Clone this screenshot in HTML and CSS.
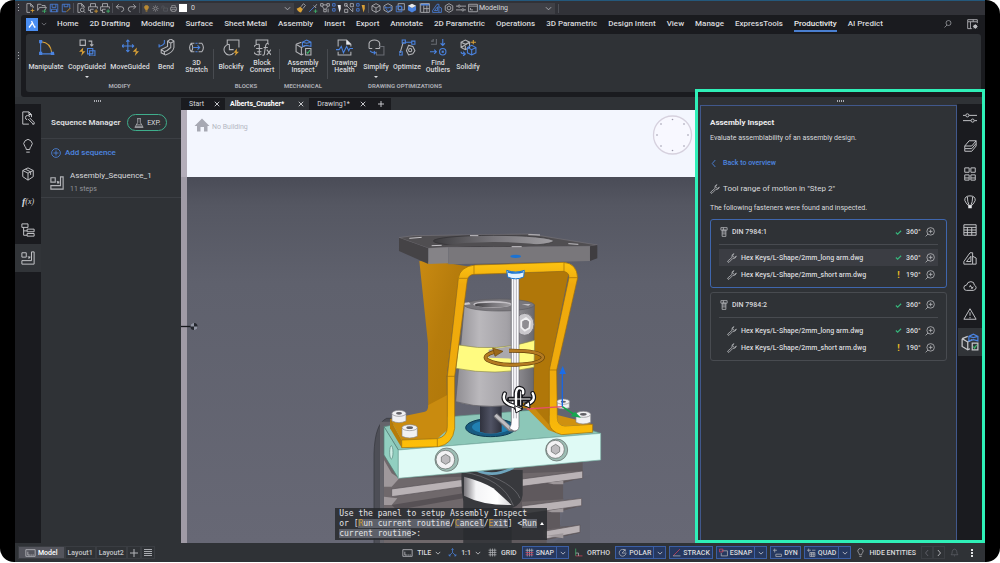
FILE: index.html
```html
<!DOCTYPE html>
<html lang="en">
<head>
<meta charset="utf-8">
<meta name="viewport" content="width=device-width, initial-scale=1">
<title>Alberts_Crusher - Assembly Inspect</title>
<link rel="stylesheet" href="styles.css">
</head>
<body>
<svg class="defs" aria-hidden="true">
  <symbol id="chev" viewBox="0 0 8 8"><path d="M1 2.5 4 5.5 7 2.5"/></symbol>
  <symbol id="close" viewBox="0 0 8 8"><path d="M1 1 7 7M7 1 1 7"/></symbol>
  <symbol id="plus" viewBox="0 0 8 8"><path d="M4 0V8M0 4H8"/></symbol>
  <symbol id="new" viewBox="0 0 16 16"><path d="M9 1H3V15H8M9 1 13 5V8M9 1V5H13"/><path class="y" d="M9 12H15M12 9V15"/></symbol>
  <symbol id="open" viewBox="0 0 16 16"><path d="M1 12V2H6L8 4H13V7M1 12 4 7H15L13 11"/><path class="g" d="M8 13H15M12 10V16"/></symbol>
  <symbol id="save" viewBox="0 0 16 16"><path class="b" d="M2 2H14V14H2ZM5 2V7H11V2M4 14V10H12V14"/></symbol>
  <symbol id="saveas" viewBox="0 0 16 16"><path class="b" d="M8 14H2V2H14V8M5 2V6H11V2"/><path class="y" d="M9 14 15 8"/></symbol>
  <symbol id="preview" viewBox="0 0 16 16"><path d="M7 15H3V1H9L13 5V8M9 1V5H13"/><circle cx="10" cy="11" r="3"/><path d="m12 13 3 3"/></symbol>
  <symbol id="print" viewBox="0 0 16 16"><path d="M4 6V1H12V6M4 12H1V6H15V12H12M4 10H12V15H4Z"/></symbol>
  <symbol id="printy" viewBox="0 0 16 16"><path d="M4 6V1H12V6M4 12H1V6H15V9M8 15H4V10H9"/><path class="y" d="M10 13H16M13 10V16"/></symbol>
  <symbol id="printg" viewBox="0 0 16 16"><path d="M4 6V1H12V6M4 12H1V6H15V9M8 15H4V10H9"/><path class="g" d="M10 13H16M13 10V16"/></symbol>
  <symbol id="undo" viewBox="0 0 16 16"><path d="M6 2 2 6 6 10M2 6H10Q14 6 14 10 14 13 10 14"/></symbol>
  <symbol id="redo" viewBox="0 0 16 16"><path d="M10 2 14 6 10 10M14 6H6Q2 6 2 10 2 13 6 14"/></symbol>
  <symbol id="bulb" viewBox="0 0 16 16"><path d="M6 12Q6 10 4.500 8.500A4.700 4.700 0 1 1 11.500 8.500Q10 10 10 12ZM6 15H10"/></symbol>
  <symbol id="sun" viewBox="0 0 16 16"><circle cx="8" cy="8" r="3.500"/><path d="M8 1V3M8 13V15M1 8H3M13 8H15M3 3 4.500 4.500M11.500 11.500 13 13M13 3 11.500 4.500M4.500 11.500 3 13"/></symbol>
  <symbol id="lock" viewBox="0 0 16 16"><path d="M6 7H15V14H6ZM2 8V4Q2 2 4.500 2T7 4V7"/></symbol>
  <symbol id="brush" viewBox="0 0 16 16"><path class="yf" d="M1 9 7 6 11 10 8 15Q4 15 1 9Z"/><path d="M8 6 12 1 15 4 11 9"/></symbol>
  <symbol id="pick" viewBox="0 0 16 16"><path class="b" d="M2 14 10 6"/><path d="M9 4 13 8M11 6 14 2"/><path class="g" d="M9 13H15M12 10V16"/></symbol>
  <symbol id="nodes" viewBox="0 0 16 16"><path d="M1 1H5V5H1ZM11 1H15V5H11ZM6 10H10V14H6ZM5 3H11M3 5 7 10M13 5 9 10M13 9V15"/></symbol>
  <symbol id="isol" viewBox="0 0 16 16"><path class="b" d="M1 1H5V5H1ZM1 9H5V13H1Z"/><path class="wf" d="M9 3H14V9L12 15Z"/></symbol>
  <symbol id="isoly" viewBox="0 0 16 16"><path class="b" d="M1 1H5V5H1ZM1 9H5V13H1Z"/><path class="yf" d="M9 3H14V9L12 15Z"/></symbol>
  <symbol id="hide" viewBox="0 0 16 16"><path d="M1 1H5V5H1ZM10 1H15V6H10ZM1 10H6V15H1ZM3 3 14 14M14 8V14"/></symbol>
  <symbol id="cube" viewBox="0 0 16 16"><path d="M8 1 14.500 4.500V11.500L8 15 1.500 11.500V4.500ZM1.500 4.500 8 8 14.500 4.500M8 8V15"/></symbol>
  <symbol id="cubeb" viewBox="0 0 16 16"><path d="M8 1 14.500 4.500V11.500L8 15 1.500 11.500V4.500Z"/><path class="b" d="M3 6 8 8 13 6V11L8 14Z"/></symbol>
  <symbol id="cubes" viewBox="0 0 16 16"><path d="M5 1H15V11H5Z"/><path class="b" d="M2 5H11V14H2Z"/><circle class="b" cx="8" cy="8" r="3"/></symbol>
  <symbol id="cubef" viewBox="0 0 16 16"><path class="bf" d="M1.500 4.500 8 8V15L1.500 11.500ZM14.500 4.500 8 8V15L14.500 11.500Z"/><path class="wf" d="M8 1 14.500 4.500 8 8 1.500 4.500Z"/></symbol>
  <symbol id="propsb" viewBox="0 0 16 16"><path class="bf" d="M1 1H15V4H1Z"/><path d="M1 1H15V15H1ZM6 4V15M11 4V15M6 9H15"/></symbol>
  <symbol id="tri" viewBox="0 0 16 16"><path d="M1 15V12L8 2H11V15ZM4 12 9 6V12ZM11 6 15 8V15H11"/></symbol>
  <symbol id="gear" viewBox="0 0 16 16"><path d="M8 1 14 4.500V11.500L8 15 2 11.500V4.500Z"/><circle cx="8" cy="8" r="3"/></symbol>
  <symbol id="sliders" viewBox="0 0 16 16"><path d="M0 5H3M7 5H16M0 11H9M13 11H16"/><circle cx="5" cy="5" r="1.800"/><circle cx="11" cy="11" r="1.800"/></symbol>
  <symbol id="screen" viewBox="0 0 16 16"><path d="M1 2H15V14H1ZM1 5H15M4 11H8M4 8V11"/></symbol>
  <symbol id="manip" viewBox="0 0 16 16"><path class="b" d="M2.500 2V14H14"/><path class="y" d="M3 2.500Q12 3 13 13.500"/><path class="bf" d="M1 1H4V4H1ZM1 12H4V15H1ZM12 12H15L15.500 15H12Z"/></symbol>
  <symbol id="copyg" viewBox="0 0 16 16"><path d="M1 1H6V6H1ZM9 2H12V6M10.500 5 12 6.500 13.500 5"/><path class="b" d="M8 9H13V14H8ZM10 11H15V16H10Z"/><path class="yf" d="M4 8 0 12H3L2 16 6 11.500H3.500Z"/></symbol>
  <symbol id="moveg" viewBox="0 0 16 16"><path class="b" d="M5.500 1V12M0 6.500H11M4 2.500 5.500 1 7 2.500M4 10.500 5.500 12 7 10.500M1.500 5 0 6.500 1.500 8M9.500 5 11 6.500 9.500 8"/><path class="yf" d="M14 8 10 12H13L12 16 16 11.500H13.500Z"/></symbol>
  <symbol id="bend" viewBox="0 0 16 16"><path d="M9 2 12 0 15 2V8Q14 13 7 15L3 13V10L9 7ZM9 2 12 4 15 2M12 4V8Q9 11 6 12L3 10M6 12V14"/><path class="b" d="M6 1V4Q5 6 1 7M1 5V8"/></symbol>
  <symbol id="stretch" viewBox="0 0 16 16"><path d="M6 4H3Q0 8 3 12H6M10 4H13Q16 8 13 12H10M3 4Q6 8 3 12"/><path class="b" d="M5 8H11M9 6 11 8 9 10M7 4H9M7 12H9"/></symbol>
  <symbol id="blockify" viewBox="0 0 16 16"><path d="M4 5V1H15V8M6 5A5 5 0 1 0 10 13M6 5V10H10"/><path class="yf" d="M13 9 10 13H12L11 16 15 12H13Z"/></symbol>
  <symbol id="bconv" viewBox="0 0 16 16"><path d="M2 5V1H13V4M5 5A5 5 0 1 0 7 14M2 9H8M5 5V14M3 12H7M8 15Q10 16 10 12L11 6Q12 3 14 5M9 8H13M12 10 16 15M16 10 12 15"/></symbol>
  <symbol id="inspect" viewBox="0 0 16 16"><path d="M1 5 6 3M1 5V12L6 15 8 14M1 5 6 8V15M6 8 10 6"/><path class="b" d="M7 3 11 1 15 3V7L11 6 7 7ZM7 3 11 4 15 3"/><path d="M10 9H15V15H10Z"/><path class="g" d="m11 12 1 1.500 2-3"/></symbol>
  <symbol id="health" viewBox="0 0 16 16"><path d="M2 7V1H10L14 5V7M10 1V5H14M2 12V15H14V12"/><path class="wf" d="M10 1V5H14Z"/><path class="b" d="M0 10H3L5 7 7 13 10 7 12 11 13 9H16"/></symbol>
  <symbol id="simplify" viewBox="0 0 16 16"><path d="M1 9V4Q2 1 6 1T11 4V9M1 9H4M7 9H11"/><path class="d" d="M10 7H15V15H8V12"/><path class="b" d="M2 11Q3 13 7 13M5.500 11.500 7 13 5.500 14.500"/></symbol>
  <symbol id="optim" viewBox="0 0 16 16"><path d="M1 13 4 3"/><path class="b" d="M5 3H12M3 1H6V4H3ZM12 2H15V5H12ZM0 12H3V15H0Z"/><path d="m9 6 4 1 2 4-2 3-4 1-2-4Z"/><circle cx="10.500" cy="10.500" r="1.500"/></symbol>
  <symbol id="outl" viewBox="0 0 16 16"><path class="d" d="M1 5H6V0M1 2H3V0"/><path class="b" d="M12 0V6M10 4 12 6 14 4M0 12H6M4 10 6 12 4 14"/><circle class="b" cx="12" cy="12" r="3"/><path class="bf" d="M11 11h2v2h-2z"/></symbol>
  <symbol id="solid" viewBox="0 0 16 16"><path d="M1 3 5 1 9 3V8L5 10 1 8ZM1 3 5 5 9 3M5 5V10M1 8 9 3"/><path class="b" d="M7 8 11 6 15 8V13L11 15 7 13ZM7 8 11 10 15 8M11 10V15M1 12Q1 14 4 14M3 12 5 14 3 16"/><path class="y" d="M10 3H15M12.500 1V5"/></symbol>
  <symbol id="search" viewBox="0 0 16 16"><circle cx="9" cy="6" r="5"/><path d="M6 10 1 15"/></symbol>
  <symbol id="panelgear" viewBox="0 0 16 16"><path d="M1 1H15V4H1ZM1 4V14H7M5 4V14M15 4V6M9 1V4"/><circle class="wf" cx="12" cy="11" r="2.500"/><path d="M12 7.500V14.500M8.500 11H15.500M9.500 8.500 14.500 13.500M14.500 8.500 9.500 13.500"/></symbol>
  <symbol id="doctool" viewBox="0 0 16 16"><path d="M9 15H2V1H9L12 4V7M9 1V4H12M14 15 8 9M15 13 10 8M7 10A2.500 2.500 0 1 1 10 7M13 15H15V13"/><circle class="wf" cx="10" cy="4" r="1"/></symbol>
  <symbol id="cuboid" viewBox="0 0 16 16"><path d="M8 1 14 4V11L8 15 2 11V4ZM2 4 8 7 14 4M8 7V15M5 2.500 11 5.500V9"/></symbol>
  <symbol id="tree" viewBox="0 0 16 16"><path d="M1 1H8V5H1ZM3 5V14H7M3 9H7M7 7H15V10H7ZM7 12H15V15H7Z"/></symbol>
  <symbol id="seq" viewBox="0 0 16 16"><path d="M1 2H6V7H1ZM12 1H15V15H1V11H12ZM8 6 10 8M8 8H10V6"/></symbol>
  <symbol id="layers" viewBox="0 0 16 16"><path d="M2 8 7 2H15L10 8ZM2 8V11H10L15 5V2M2 11V14H10L15 8V5"/></symbol>
  <symbol id="grid4" viewBox="0 0 16 16"><path d="M2 1H7V6H2ZM9 1H14V6H9ZM2 9H7V15H2ZM9 9H14V15H9ZM2 12.500H7M9 12.500H14"/></symbol>
  <symbol id="balloon" viewBox="0 0 16 16"><path d="M8 1Q14 1 14 6 13 9 10 12H6Q3 9 2 6 2 1 8 1ZM5 2Q5 8 7 12M11 2Q11 8 9 12"/><path class="wf" d="M6 12H10V15H6Z"/></symbol>
  <symbol id="table" viewBox="0 0 16 16"><path d="M1 2H15V14H1ZM1 5H15M1 8H15M1 11H15M5 5V14M10 5V14"/></symbol>
  <symbol id="cloud" viewBox="0 0 16 16"><path d="M4 13Q1 13 1 10T4 7Q5 3 9 3T13 7Q15 8 15 10T12 13Z"/><path d="m8 7 3 4M9 11l3-2M7 9l2-1"/></symbol>
  <symbol id="warn" viewBox="0 0 16 16"><path d="M8 2 15 14H1ZM8 6V10M8 11.500V13"/></symbol>
  <symbol id="flask" viewBox="0 0 16 16"><path d="M5 1H11M6 1V7L2 14H14L10 7V1M4 11H12M1 15H15"/></symbol>
  <symbol id="addc" viewBox="0 0 16 16"><circle cx="8" cy="8" r="7"/><path d="M8 4V12M4 8H12"/></symbol>
  <symbol id="wrench" viewBox="0 0 16 16"><path d="M11 1Q7 2 8 7L1 13Q1 15 3 15L9 9Q14 9 15 5L12 7 10 6 9 4Z"/></symbol>
  <symbol id="bolt" viewBox="0 0 16 16"><path d="M3 1H13V5H3ZM5 5H11V15H5ZM5 8H11M5 11H11M7 1V5"/></symbol>
  <symbol id="zoomto" viewBox="0 0 16 16"><circle cx="9" cy="7" r="6"/><path d="M5 11 1 15M9 4V10M6 7H12"/></symbol>
  <symbol id="check" viewBox="0 0 8 8"><path d="M1 4 3 6 7 2"/></symbol>
  <symbol id="back" viewBox="0 0 8 8"><path d="M5.500 0 2 4 5.500 8"/></symbol>
  <symbol id="fwd" viewBox="0 0 8 8"><path d="M2.500 0 6 4 2.500 8"/></symbol>
  <symbol id="model" viewBox="0 0 16 12"><path d="M1 1H15V11H1ZM4 4V9H7M8 9H10M11 9H13"/></symbol>
  <symbol id="axes" viewBox="0 0 16 16"><path d="M8 8V1M6 3 8 1 10 3M8 8 2 14M2 11V14H5M8 8 14 14M14 11V14H11"/></symbol>
  <symbol id="hash" viewBox="0 0 16 16"><path d="M4 1V15M8 1V15M12 1V15M1 4H15M1 8H15M1 12H15"/></symbol>
  <symbol id="hashr" viewBox="0 0 16 16"><path d="M4 1V15M8 1V15M12 1V15M1 4H15"/><path class="r" d="M1 8H15M1 12H15"/></symbol>
  <symbol id="ortho" viewBox="0 0 16 16"><path class="g" d="M3 1V14"/><path class="r" d="M3 14H15"/><path d="M3 9H8V14"/></symbol>
  <symbol id="polar" viewBox="0 0 16 16"><path d="M13 5A6 6 0 1 0 14 10M7 9H15M7 9 13 3M13 3H9M13 3V6"/></symbol>
  <symbol id="strack" viewBox="0 0 16 16"><path class="r" d="M2 14 14 2"/><path d="M2 14H15"/></symbol>
  <symbol id="esnap" viewBox="0 0 16 16"><path d="M5 5H15V14H4V9"/><path class="r" d="M1 2H7V7H1Z"/></symbol>
  <symbol id="dyn" viewBox="0 0 16 16"><path d="M3 1V8M0 4H7M5 11H15V15H5Z"/></symbol>
  <symbol id="quad" viewBox="0 0 16 16"><path d="M3 1V7M0 4H7M5 8H14V15H5ZM8 8V15M11 8V15M5 11H14M9 4H15"/></symbol>
  <symbol id="bell" viewBox="0 0 16 16"><path d="M2 12Q4 10 4 6 5 2 8 2T12 6Q12 10 14 12ZM7 14H9"/></symbol>
</svg>

<div class="app">
  <div class="quickbar">
    <span class="grip-v"></span>
    <div class="tools">
      <button aria-label="New"><svg><use href="#new"/></svg></button>
      <button aria-label="Open"><svg><use href="#open"/></svg></button>
      <button aria-label="Save"><svg><use href="#save"/></svg></button>
      <button aria-label="Save as"><svg><use href="#saveas"/></svg></button>
    </div>
    <div class="tools">
      <button aria-label="Preview"><svg><use href="#preview"/></svg></button>
      <button aria-label="Print"><svg><use href="#printy"/></svg></button>
      <button aria-label="Publish"><svg><use href="#printg"/></svg></button>
    </div>
    <div class="tools">
      <button aria-label="Undo"><svg><use href="#undo"/></svg></button>
      <button aria-label="Redo"><svg><use href="#redo"/></svg></button>
    </div>
    <div class="combo layer">
      <svg class="lamp"><use href="#bulb"/></svg><svg><use href="#sun"/></svg><svg class="dim"><use href="#lock"/></svg><svg><use href="#print"/></svg><span class="swatch"></span>
      <select aria-label="Layer"><option>0</option></select>
      <svg class="chev"><use href="#chev"/></svg>
    </div>
    <div class="tools">
      <button aria-label="Match"><svg><use href="#brush"/></svg></button>
      <button aria-label="Pick"><svg><use href="#pick"/></svg></button>
      <button aria-label="Layer states"><svg><use href="#nodes"/></svg></button>
      <button aria-label="Isolate"><svg><use href="#isol"/></svg></button>
      <button aria-label="Hide"><svg><use href="#hide"/></svg></button>
      <button aria-label="Show"><svg><use href="#isoly"/></svg></button>
    </div>
    <div class="tools">
      <button aria-label="Wireframe"><svg><use href="#cube"/></svg></button>
      <button aria-label="Hidden"><svg><use href="#cubeb"/></svg></button>
      <button aria-label="Combined"><svg><use href="#cubes"/></svg></button>
      <button aria-label="Shaded"><svg><use href="#cubef"/></svg></button>
    </div>
    <div class="tools last">
      <button aria-label="Properties"><svg><use href="#propsb"/></svg></button>
      <button aria-label="Materials"><svg class="bl"><use href="#tri"/></svg></button>
      <button aria-label="Settings"><svg><use href="#gear"/></svg></button>
      <button aria-label="Options"><svg><use href="#sliders"/></svg></button>
      <button aria-label="Display"><svg><use href="#screen"/></svg></button>
    </div>
    <div class="combo space">
      <select aria-label="Workspace"><option>Modeling</option></select>
      <svg class="chev"><use href="#chev"/></svg>
    </div>
    <span class="endsep"></span>
  </div>

  <div class="ribbon">
    <span class="grip-v mid"></span>
    <div class="ribbon-body">
      <nav class="ribbon-tabs">
        <button class="logo" aria-label="Application menu"><svg viewBox="0 0 12 12"><path d="M5.500 2.500 8.500 8.500M6.500 4.500 3 9M8 8.500H9.500"/></svg></button>
        <svg class="chev"><use href="#chev"/></svg>
        <div class="tablist">
          <a href="#">Home</a><a href="#">2D Drafting</a><a href="#">Modeling</a><a href="#">Surface</a><a href="#">Sheet Metal</a><a href="#">Assembly</a><a href="#">Insert</a><a href="#">Export</a><a href="#">Annotate</a><a href="#">2D Parametric</a><a href="#">Operations</a><a href="#">3D Parametric</a><a href="#">Design Intent</a><a href="#">View</a><a href="#">Manage</a><a href="#">ExpressTools</a><a href="#" class="on">Productivity</a><a href="#">AI Predict</a>
        </div>
        <button class="nav-icon find" aria-label="Search"><svg><use href="#search"/></svg></button>
        <button class="nav-icon" aria-label="Panel settings"><svg><use href="#panelgear"/></svg></button>
      </nav>
      <div class="ribbon-panel">
        <section class="group modify">
          <div class="cmds">
            <button><svg><use href="#manip"/></svg><span>Manipulate</span></button>
            <button class="more"><svg><use href="#copyg"/></svg><span>CopyGuided</span></button>
            <button><svg><use href="#moveg"/></svg><span>MoveGuided</span></button>
            <button><svg><use href="#bend"/></svg><span>Bend</span></button>
            <button><svg><use href="#stretch"/></svg><span>3D<br>Stretch</span></button>
          </div>
          <h2>MODIFY</h2>
        </section>
        <section class="group blocks">
          <div class="cmds">
            <button><svg><use href="#blockify"/></svg><span>Blockify</span></button>
            <button><svg><use href="#bconv"/></svg><span>Block<br>Convert</span></button>
          </div>
          <h2>BLOCKS</h2>
        </section>
        <section class="group mech">
          <div class="cmds">
            <button><svg><use href="#inspect"/></svg><span>Assembly<br>Inspect</span></button>
          </div>
          <h2>MECHANICAL</h2>
        </section>
        <section class="group drawing">
          <div class="cmds">
            <button><svg><use href="#health"/></svg><span>Drawing<br>Health</span></button>
            <button class="more"><svg><use href="#simplify"/></svg><span>Simplify</span></button>
            <button><svg><use href="#optim"/></svg><span>Optimize</span></button>
            <button><svg><use href="#outl"/></svg><span>Find<br>Outliers</span></button>
            <button><svg><use href="#solid"/></svg><span>Solidify</span></button>
          </div>
          <h2>DRAWING OPTIMIZATIONS</h2>
        </section>
      </div>
    </div>
  </div>

  <main class="work">
    <aside class="dock left">
      <div class="drag"><span></span></div>
      <div class="dock-body">
        <div class="iconbar">
          <button aria-label="Tips"><svg><use href="#doctool"/></svg></button>
          <button aria-label="Ideas"><svg><use href="#bulb"/></svg></button>
          <button aria-label="Components"><svg><use href="#cuboid"/></svg></button>
          <button aria-label="Parameters" class="fx"><i>f</i><small>(x)</small></button>
          <button aria-label="Structure"><svg><use href="#tree"/></svg></button>
          <button aria-label="Sequences" class="on"><svg><use href="#seq"/></svg></button>
        </div>
        <div class="seq-panel">
          <header><h1>Sequence Manager</h1><button class="exp"><svg><use href="#flask"/></svg>EXP.</button></header>
          <button class="add"><svg><use href="#addc"/></svg>Add sequence</button>
          <button class="seq-item"><svg><use href="#seq"/></svg><span><b>Assembly_Sequence_1</b><small>11 steps</small></span></button>
        </div>
      </div>
    </aside>

    <section class="center">
      <div class="doc-tabs">
        <div class="doc"><a href="#">Start</a><button aria-label="Close Start"><svg><use href="#close"/></svg></button></div>
        <div class="doc on"><a href="#">Alberts_Crusher*</a><button aria-label="Close Alberts_Crusher"><svg><use href="#close"/></svg></button></div>
        <div class="doc"><a href="#">Drawing1*</a><button aria-label="Close Drawing1"><svg><use href="#close"/></svg></button></div>
        <button class="doc-add" aria-label="New drawing"><svg><use href="#plus"/></svg></button>
      </div>
      <div class="viewport">
        <svg class="scene" viewBox="181 110 514 433" preserveAspectRatio="xMidYMid slice" role="img" aria-label="Crusher assembly model">
          <defs>
            <linearGradient id="sky" x1="0" y1="0" x2="0" y2="1"><stop offset=".15" stop-color="#494b56"/><stop offset=".22" stop-color="#555762"/><stop offset=".4" stop-color="#5f616d"/><stop offset="1" stop-color="#676875"/></linearGradient>
            <linearGradient id="cyl"><stop offset="0" stop-color="#8f8d92"/><stop offset=".3" stop-color="#bab8bc"/><stop offset=".65" stop-color="#a4a2a7"/><stop offset="1" stop-color="#69686d"/></linearGradient>
            <linearGradient id="hole"><stop offset="0" stop-color="#3d3c3f"/><stop offset=".5" stop-color="#77757a"/><stop offset="1" stop-color="#a09ea2"/></linearGradient>
            <linearGradient id="shaft"><stop offset="0" stop-color="#30323e"/><stop offset=".5" stop-color="#505364"/><stop offset="1" stop-color="#2e303b"/></linearGradient>
            <linearGradient id="gold" x1="0" y1="0" x2="1" y2="1"><stop offset="0" stop-color="#c98a12"/><stop offset=".4" stop-color="#b67c0c"/><stop offset="1" stop-color="#ab7408"/></linearGradient>
            <linearGradient id="band" x1="0" y1="0" x2="0" y2="1"><stop offset="0" stop-color="#fdc411"/><stop offset=".12" stop-color="#eea90d"/><stop offset=".7" stop-color="#f0ac0c"/><stop offset="1" stop-color="#fdbf08"/></linearGradient>
            <linearGradient id="low"><stop offset="0" stop-color="#77757a"/><stop offset=".25" stop-color="#f4f4f6"/><stop offset=".7" stop-color="#fff"/><stop offset="1" stop-color="#d5d4d8"/></linearGradient>
          </defs>
          <rect x="181" y="110" width="514" height="433" fill="url(#sky)"/>
          <rect x="181" y="110" width="514" height="67" fill="#f3f6fe"/>
          <rect x="181" y="110" width="6" height="433" fill="#a09ba6"/>
          <rect x="181" y="110" width="6" height="67" fill="#b3adb9"/>
          <path d="M181 326.500H193" stroke="#17191e"/>
          <circle cx="194" cy="326.500" r="3.500" fill="#23262d"/><path d="M194 323A3.500 3.500 0 0 0 190.500 326.500H194ZM194 326.500V330A3.500 3.500 0 0 0 197.500 326.500Z" fill="#9094a2"/>
          <circle cx="672.500" cy="135" r="19" fill="#f8f8ff" stroke="#d6d1de"/>
          <g fill="#9a97a8"><circle cx="672.500" cy="119.500" r=".8"/><circle cx="672.500" cy="150.500" r=".8"/><circle cx="657" cy="135" r=".8"/><circle cx="688" cy="135" r=".8"/><circle cx="661" cy="124" r=".8"/><circle cx="684" cy="124" r=".8"/><circle cx="661" cy="146" r=".8"/><circle cx="684" cy="146" r=".8"/></g>
          <path d="M194.500 126 202 118.500 209.500 126H207.500V131.500H204V127H200.500V131.500H197V126Z" fill="#a7a9b3"/>

          <g transform="translate(360 215) scale(.33333)" stroke-linejoin="round">
            <path d="M42 1000V715Q45 625 80 610H120V1000Z" fill="#4d4e56" stroke="#34353b" stroke-width="2"/>
            <path d="M60 620H110V1000H60Z" fill="#65646b"/>
            <path d="M72 720H668V790L610 805V850H665V872L600 890V930H660V955L560 975V1000H72Z" fill="#5f595d"/>
            <path d="M72 722 118 790 310 785V1000H72Z" fill="#6f686b"/>
            <path d="M486 775 668 768 560 802 490 812ZM486 860 665 850 560 885 486 895ZM550 945 660 930 600 968H550Z" fill="#6f686b"/>
            <path d="M610 805 690 780V1000H560L600 968 665 952V930L600 935 610 890 668 872V850L610 855Z" fill="#646571"/>
            <path d="M95 822 310 793V815L95 845ZM486 792 668 768V790L486 814ZM486 873 665 850V872L486 898ZM556 948 660 930V952L556 972Z" fill="#b9b2b5" stroke="#575156" stroke-width="2"/>
            <path d="M72 735 95 775 118 790 95 815H72ZM72 845 112 850 95 870H72ZM560 803 610 797V808H580ZM560 888 610 880V892H575ZM560 962 610 955V970Z" fill="#9f989b"/>
            <path d="M95 870 310 835V850L110 885Z" fill="#575155"/>
            <path d="M305 765H488V840Q485 870 455 880V1000H310V860Q302 820 305 765Z" fill="#38393d"/>
            <path d="M312 785Q370 800 400 820L455 870Q370 872 312 842Z" fill="url(#low)"/>
            <path d="M305 770Q430 790 460 872M345 768Q460 800 480 850" fill="none" stroke="#75757a" stroke-width="2"/>
            <path d="M350 765Q400 790 460 758" fill="none" stroke="#6ea5bd" stroke-width="8"/>

            <path d="M72 635 205 610 520 585 722 655 115 705Z" fill="#8cc7b8" stroke="#5c8a80" stroke-width="2"/>
            <path d="M72 635 115 705V790L72 720Z" fill="#91cfc0" stroke="#527d74" stroke-width="2"/>
            <path d="M115 705 722 655V735L115 790Z" fill="#dffaf5" stroke="#7ab2a6" stroke-width="2"/>
            <ellipse cx="94" cy="712" rx="5" ry="20" fill="#cfeee6" stroke="#558278" stroke-width="2"/>
            <ellipse cx="392" cy="638" rx="75" ry="27" fill="#185b82" stroke="#0d3850" stroke-width="3"/>
            <ellipse cx="394" cy="636" rx="58" ry="20" fill="#2180b2"/>

            <path d="M475 175 627 168 568 465V635L520 580H475Z" fill="#b07709"/>
            <path d="M500 580 520 575 590 655 565 645Z" fill="#c98c10"/>
            <path d="M178 138 265 145 330 155 295 190 260 484 262 640 205 655 204 385Z" fill="url(#gold)"/>
            <path d="M90 612 195 590Q204 588 205 570L262 540V645L232 671 125 675Z" fill="#c98b0f"/>
            <path d="M90 612 125 675V698L90 640Z" fill="#b57b09"/>

            <path d="M360 565H425V650Q392 662 360 650Z" fill="url(#shaft)"/>
            <path d="M313 270 287 560Q390 590 520 557L523 270Z" fill="url(#cyl)" stroke="#5d5c61" stroke-width="2"/>
            <ellipse cx="418" cy="270" rx="105" ry="18" fill="#79777c" stroke="#5d5c61" stroke-width="2"/>
            <ellipse cx="398" cy="268" rx="58" ry="10" fill="#c4c1c6"/><ellipse cx="398" cy="270" rx="54" ry="7" fill="url(#hole)"/>
            <path d="M303 265 327 262 332 268 310 271ZM485 268 512 267 505 272Z" fill="#cbc8cc"/>
            <path d="M296 390Q410 412 524 376L522 457Q405 484 288 460Z" fill="#fffb80" stroke="#8f8c4a" stroke-width="2"/>
            <path d="M386 404 475 390V432L386 428Z" fill="#aaa8ad"/>
            <ellipse cx="494" cy="328" rx="28" ry="33" fill="#cac8cc" stroke="#77757a" stroke-width="3"/>
            <path d="m484 318 14-9 12 10-2 20-14 8-10-10Z" fill="#8f8d92" stroke="#f1f0f2" stroke-width="5"/>

            <path d="M125 675 232 671Q262 665 262 635V484L295 190Q300 155 345 150L610 142Q650 145 653 188L590 465 592 610Q593 632 615 633L698 628V652L605 659Q570 650 568 625V465L627 188Q628 172 610 169L345 178Q325 178 322 195L284 484V640Q278 688 235 695L125 698Z" fill="url(#band)" stroke="#9d6b08" stroke-width="2"/>
            <path d="M592 600 640 612 698 628 615 633Q593 632 592 610Z" fill="#cf9110"/>
            <path d="M342 150V178M612 142V170M297 190H323M628 188H653M260 484H284M568 465H590M232 671V695" stroke="#9d6b08" stroke-width="2"/>

            <path d="M117 68 160 62 510 57 712 90 690 94 265 97 205 100Z" fill="#504e51" stroke="#757378" stroke-width="2"/>
            <ellipse cx="400" cy="78" rx="180" ry="17" fill="url(#hole)" stroke="#302f32" stroke-width="2"/>
            <path d="M230 92Q400 70 570 92L690 94H230Z" fill="#504e51"/>
            <path d="M117 68 205 100V147L117 108Z" fill="#454346"/>
            <path d="M205 100 265 97V145L205 147Z" fill="#858387"/>
            <path d="M265 97 690 94V138L265 148Z" fill="#79777b"/>
            <path d="M690 94 712 90V130L690 138Z" fill="#3f3d40"/>
            <path d="M148 70 185 67M215 92 245 91M505 59 540 60M625 86 655 88M455 95H485M330 62H355" stroke="#c4c2c6" stroke-width="3"/>
            <ellipse cx="467" cy="124" rx="16" ry="5" fill="#1b72d2"/>

            <g fill="#f1f1f3" stroke="#88868b" stroke-width="2">
              <path d="M96 597V618Q117 628 138 618V597Z"/><ellipse cx="117" cy="595" rx="21" ry="9"/>
              <path d="M126 640V664Q149 674 172 664V640Z"/><ellipse cx="149" cy="638" rx="23" ry="9"/>
              <path d="M592 562V578Q610 586 628 578V562Z"/><ellipse cx="610" cy="560" rx="19" ry="8"/>
              <path d="M648 600V622Q668 632 692 622V600Z"/><ellipse cx="670" cy="598" rx="22" ry="9"/>
            </g>
            <g fill="#626166"><ellipse cx="117" cy="595" rx="9" ry="4"/><ellipse cx="149" cy="638" rx="10" ry="4"/><ellipse cx="610" cy="560" rx="8" ry="3"/><ellipse cx="670" cy="598" rx="10" ry="4"/></g>
            <g stroke="#5f6362" stroke-width="2"><circle cx="260" cy="734" r="35" fill="#9dbdb4"/><circle cx="256" cy="734" r="28" fill="#f3f2f4"/><path d="m244 726 13-8 13 8v14l-13 8-13-8Z" fill="#bdbbbe"/><circle cx="590" cy="705" r="33" fill="#9dbdb4"/><circle cx="586" cy="703" r="27" fill="#f3f2f4"/><path d="m574 696 13-8 12 8v14l-12 8-13-8Z" fill="#bdbbbe"/></g>

            <path d="M406 600 450 642H468" fill="none" stroke="#77777b" stroke-width="15"/><path d="M406 600 450 640H464" fill="none" stroke="#bebdc1" stroke-width="9"/>
            <path d="M454 190H477V635Q476 648 462 648L448 640Q455 630 454 618Z" fill="#fcfcfe" stroke="#636269" stroke-width="2"/><path d="M461 190V610M469 190V610" stroke="#8f8c95" stroke-width="2"/>
            <path d="M440 166Q467 176 493 166L491 186Q467 197 443 186Z" fill="#e4f2fc" stroke="#1b75d0" stroke-width="3"/><path d="M443 170Q467 178 490 170" fill="none" stroke="#1b75d0" stroke-width="5"/>
            <path d="M405 410Q365 422 382 435 415 452 470 449 548 445 549 426 540 406 447 407" fill="none" stroke="#65420b" stroke-width="12"/>
            <path d="M405 410Q365 422 382 435 415 452 470 449 548 445 549 426 540 406 447 407" fill="none" stroke="#b47b22" stroke-width="8"/>
            <path d="M398 399 429 409 405 424Z" fill="#9a671b" stroke="#68440c" stroke-width="2"/>

            <path d="M607 575 500 582" stroke="#e45167" stroke-width="4"/>
            <path d="M607 575V475" stroke="#1b66df" stroke-width="4"/><path d="M598 477 608 453 618 477Z" fill="#1b6de8"/>
            <path d="M607 575 645 600" stroke="#10a447" stroke-width="5"/><path d="M632 604 645 590 663 608Z" fill="#16a850"/>
            <g fill="none" stroke-linecap="round"><path d="M434 536Q425 558 448 568L482 580M518 535Q530 558 500 568M468 578V535Q470 517 481 520 492 522 489 535M448 552H510M482 530V570" stroke="#15151a" stroke-width="14"/><path d="M434 536Q425 558 448 568L482 580M518 535Q530 558 500 568M468 578V535Q470 517 481 520 492 522 489 535" stroke="#fff" stroke-width="7"/><path d="M448 552H510M482 530V570" stroke="#fff" stroke-width="3"/></g>
            <path d="M464 572 488 582 468 594ZM508 560 490 571 510 579Z" fill="#fff" stroke="#15151a" stroke-width="3"/>
          </g>
        </svg>
        <span class="building">No Building</span>
        <div class="cmdline">
          <p>Use the panel to setup Assembly Inspect<br>or [<mark><b>R</b>un current routine</mark>/<mark><b>C</b>ancel</mark>/<mark><b>E</b>xit</mark>] &lt;<mark>Run<br>current routine</mark>&gt;:</p>
          <button aria-label="Expand history"></button>
        </div>
      </div>
    </section>

    <aside class="dock right">
      <div class="drag"><span></span></div>
      <div class="dock-body">
        <div class="inspect">
          <h1>Assembly Inspect</h1>
          <p class="lead">Evaluate assemblability of an assembly design.</p>
          <a class="backlink" href="#"><svg><use href="#back"/></svg>Back to overview</a>
          <h2><svg><use href="#wrench"/></svg>Tool range of motion in "Step 2"</h2>
          <p class="found">The following fasteners were found and inspected.</p>
          <section class="card on">
            <div class="row head"><svg><use href="#bolt"/></svg><span>DIN 7984:1</span><svg class="ok"><use href="#check"/></svg><output>360°</output><button aria-label="Zoom to fastener"><svg><use href="#zoomto"/></svg></button></div>
            <div class="row tool sel"><svg><use href="#wrench"/></svg><span>Hex Keys/L-Shape/2mm_long arm.dwg</span><svg class="ok"><use href="#check"/></svg><output>360°</output><button aria-label="Zoom to tool"><svg><use href="#zoomto"/></svg></button></div>
            <div class="row tool"><svg><use href="#wrench"/></svg><span>Hex Keys/L-Shape/2mm_short arm.dwg</span><b class="alert">!</b><output>190°</output><button aria-label="Zoom to tool"><svg><use href="#zoomto"/></svg></button></div>
          </section>
          <section class="card">
            <div class="row head"><svg><use href="#bolt"/></svg><span>DIN 7984:2</span><svg class="ok"><use href="#check"/></svg><output>360°</output><button aria-label="Zoom to fastener"><svg><use href="#zoomto"/></svg></button></div>
            <div class="row tool"><svg><use href="#wrench"/></svg><span>Hex Keys/L-Shape/2mm_long arm.dwg</span><svg class="ok"><use href="#check"/></svg><output>360°</output><button aria-label="Zoom to tool"><svg><use href="#zoomto"/></svg></button></div>
            <div class="row tool"><svg><use href="#wrench"/></svg><span>Hex Keys/L-Shape/2mm_short arm.dwg</span><b class="alert">!</b><output>190°</output><button aria-label="Zoom to tool"><svg><use href="#zoomto"/></svg></button></div>
          </section>
        </div>
        <div class="iconbar">
          <button aria-label="Properties"><svg><use href="#sliders"/></svg></button>
          <button aria-label="Layers"><svg><use href="#layers"/></svg></button>
          <button aria-label="Library"><svg><use href="#grid4"/></svg></button>
          <button aria-label="Rendering"><svg><use href="#balloon"/></svg></button>
          <button aria-label="Tables"><svg><use href="#table"/></svg></button>
          <button aria-label="Details"><svg><use href="#tri"/></svg></button>
          <button aria-label="Cloud"><svg><use href="#cloud"/></svg></button>
          <button aria-label="Issues"><svg><use href="#warn"/></svg></button>
          <button aria-label="Assembly inspect" class="on"><svg class="big"><use href="#inspect"/></svg></button>
        </div>
      </div>
      <div class="highlight"></div>
    </aside>
  </main>

  <footer class="status">
    <div class="layouts">
      <button class="on"><svg class="wide"><use href="#model"/></svg>Model</button><button>Layout1</button><button>Layout2</button><button class="sq" aria-label="Add layout"><svg><use href="#plus"/></svg></button><button class="sq" aria-label="Layout list"><span class="burger"></span></button>
    </div>
    <div class="toggles">
      <button><svg class="wide"><use href="#model"/></svg>TILE<svg class="chev"><use href="#chev"/></svg></button>
      <button><svg class="bl"><use href="#axes"/></svg>1:1<svg class="chev"><use href="#chev"/></svg></button>
      <button><svg><use href="#hash"/></svg>GRID</button>
      <button class="on drop"><svg><use href="#hashr"/></svg>SNAP<svg class="chev"><use href="#chev"/></svg></button>
      <button><svg><use href="#ortho"/></svg>ORTHO</button>
      <button class="on drop"><svg><use href="#polar"/></svg>POLAR<svg class="chev"><use href="#chev"/></svg></button>
      <button class="on"><svg><use href="#strack"/></svg>STRACK</button>
      <button class="on drop"><svg><use href="#esnap"/></svg>ESNAP<svg class="chev"><use href="#chev"/></svg></button>
      <button class="on"><svg><use href="#dyn"/></svg>DYN</button>
      <button class="on drop"><svg><use href="#quad"/></svg>QUAD<svg class="chev"><use href="#chev"/></svg></button>
      <button><svg><use href="#bulb"/></svg>HIDE ENTITIES</button>
      <span class="pager"><button class="dim" aria-label="Previous"><svg><use href="#back"/></svg></button><button aria-label="Next"><svg><use href="#fwd"/></svg></button></span>
      <button class="dim" aria-label="Notifications"><svg><use href="#bell"/></svg></button>
      <button class="kebab" aria-label="More"><span></span></button>
    </div>
  </footer>
</div>
</body>
</html>
```

FILE: styles.css
```css
* { box-sizing: border-box; }
body {
  margin: 0;
  background: #fff;
  color: #d9dadd;
  font: 400 7px/8px Roboto, "Liberation Sans", sans-serif;
}
h1, h2, p { margin: 0; font: inherit; }
a { color: inherit; text-decoration: none; }
button, select {
  margin: 0;
  padding: 0;
  border: 0;
  background: none;
  color: inherit;
  font: inherit;
  appearance: none;
}
button { cursor: pointer; }
svg { display: block; flex: none; width: 10px; height: 10px; fill: none; stroke: #b4b5b9; stroke-width: 1.3; }
.defs { position: absolute; width: 0; height: 0; }
.y { stroke: #d9a036; }
.g { stroke: #3fb56b; }
.b { stroke: #4a83e0; }
.r { stroke: #d9435c; }
.d { stroke: #686b72; }
.yf { fill: #d9a036; stroke: none; }
.bf { fill: #4a83e0; stroke: none; }
.wf { fill: #e8e9ec; stroke: none; }
svg.bl { stroke: #4a83e0; }
svg.chev { width: 6px; height: 6px; stroke-width: 1; }

.app {
  display: flex;
  flex-direction: column;
  height: calc(100vh - 1px);
  padding: 0 15px;
  background: #000;
  border-radius: 14px;
  overflow: hidden;
}

/* quick access bar */
.quickbar {
  display: flex;
  align-items: center;
  height: 15px;
  padding-left: 2px;
  border-top: 1px solid #24587c;
  background: #313238;
}
.grip-v { flex: none; width: 3px; height: 9px; background: repeating-linear-gradient(#a9aab0 0 1px, transparent 1px 3px) center / 1px 100% no-repeat; }
.tools { display: flex; gap: 2px; padding: 0 2px; border-right: 1px solid #4c4e55; }
.grip-v + .tools { padding-left: 5px; }
.quickbar .tools svg { width: 10px; height: 10px; }
.tools.last { gap: 2px; padding: 0; border-right: 0; }
.combo { display: flex; align-items: center; gap: 2px; height: 11px; background: #3f4046; padding: 0 3px 0 1px; }
.combo svg { width: 7px; height: 7px; }
.combo select { flex: 1; min-width: 0; height: 11px; }
.layer { width: 152px; margin-left: 2px; }
.lamp { fill: #b98a35; stroke: #b98a35; }
svg.dim, .dim svg { stroke: #5f6168; }
.swatch { width: 8px; height: 8px; background: #fff; margin-right: 2px; }
.space { width: 77px; }
.endsep { width: 1px; height: 9px; margin-left: 3px; background: #4c4e55; }

/* ribbon */
.ribbon { display: flex; align-items: stretch; background: #313438; }
.grip-v.mid { align-self: center; width: 6px; }
.ribbon-body { flex: 1; min-width: 0; padding: 0 4px 5px 5px; background: #1a1b1f; border-radius: 3px 0 0 3px; }
.ribbon-tabs { display: flex; align-items: center; height: 18px; font-size: 8px; font-weight: 500; }
.logo { width: 12px; height: 13px; background: #4a8ef2; }
.logo svg { width: 12px; height: 13px; stroke: #fff; }
.ribbon-tabs > .chev { margin-left: 3px; stroke: #85878e; }
.tablist { display: flex; flex: 1; gap: 11px; padding-left: 10px; white-space: nowrap; }
.tablist a { padding: 3px 0 2px; border-bottom: 2px solid transparent; }
.tablist a.on { border-color: #4a7fd0; color: #eceded; }
.nav-icon { margin: 0 3px 0 12px; }
.nav-icon svg { height: 11px; width: 11px; }
.nav-icon.find svg { width: 8px; height: 8px; }
.ribbon-panel { display: flex; margin-top: 1px; height: 58px; background: #2f3236; border-radius: 3px; }
.group { position: relative; padding-top: 5px; }
.group + .group { background: linear-gradient(#484b50, #484b50) 0 15px / 1px 30px no-repeat; }
.cmds { display: grid; height: 43px; }
.modify .cmds { grid-template-columns: 40px 42px 44px 28px 33px; }
.blocks .cmds { grid-template-columns: 32px 30px; margin: 0 2px; }
.mech .cmds { grid-template-columns: 48px; }
.drawing .cmds { grid-template-columns: 33px 30px 32px 30px 30px; margin-left: 1px; }
.cmds button { display: flex; flex-direction: column; align-items: center; justify-content: flex-start; line-height: 7px; white-space: nowrap; }
.cmds svg { width: 17px; height: 17px; stroke-width: 1; }
.cmds span { display: flex; align-items: center; height: 14px; margin-top: 4px; font-weight: 500; }
.cmds .more::after { content: ""; margin-top: 2px; border: 2px solid transparent; border-top-color: #dcdde0; border-bottom: 0; }
.group h2 { color: #a9abb2; font-size: 6px; font-weight: 700; text-align: center; }

/* docks */
.work { display: flex; flex: 1; min-height: 0; background: #2f3236; }
.dock { position: relative; display: flex; flex-direction: column; flex: none; }
.dock.left { width: 166px; }
.dock.right { width: 290px; padding: 0 3px 3px 5px; border-left: 0; }
.drag { display: flex; flex: none; align-items: center; justify-content: center; height: 8px; }
.drag span { width: 8px; height: 2px; background: repeating-linear-gradient(90deg, #aaacb2 0 1px, transparent 1px 2px); }
.dock-body { display: flex; flex: 1; min-height: 0; }
.iconbar { display: flex; flex-direction: column; flex: none; width: 26px; margin-top: -1px; background: #1a1b1f; }
.iconbar button { display: flex; align-items: center; justify-content: center; height: 28px; }
.iconbar button.on { background: #313438; }
.iconbar svg { width: 14px; height: 14px; stroke: #c6c7ca; stroke-width: 1.1; }
.iconbar svg.big { width: 18px; height: 18px; }
.fx { font: italic 700 10px/12px "Liberation Serif", serif; }
.fx small { font-size: 8px; font-style: italic; font-weight: 400; }
.right .iconbar { width: 25px; padding-left: 1px; }

.seq-panel { flex: 1; min-width: 0; }
.seq-panel header { display: flex; align-items: center; gap: 7px; height: 34px; padding: 2px 10px 0; border-bottom: 1px solid #3c3f44; }
.seq-panel h1 { font-size: 8px; font-weight: 700; white-space: nowrap; }
.exp { display: flex; align-items: center; justify-content: center; gap: 3px; width: 40px; height: 17px; border: 1px solid #3fae8c; border-radius: 9px; }
.add { display: flex; align-items: center; gap: 4px; height: 27px; padding-left: 10px; color: #4d86e0; font-size: 8px; font-weight: 500; }
.add svg { stroke: #4d86e0; }
.seq-item { display: flex; align-items: center; gap: 6px; width: 100%; height: 32px; padding: 2px 0 0 9px; text-align: left; border-bottom: 1px solid #3c3f44; }
.seq-item svg { width: 14px; height: 14px; }
.seq-item span { display: grid; gap: 5px; }
.seq-item b { font-size: 8px; font-weight: 400; }
.seq-item small { font-size: 7px; color: #94969c; }

/* document area */
.center { display: flex; flex-direction: column; flex: 1; min-width: 0; }
.doc-tabs { display: flex; align-items: stretch; height: 13px; padding-top: 1px; }
.doc { display: flex; align-items: center; justify-content: space-between; gap: 10px; padding: 0 5px 0 8px; background: #1a1b1f; }
.doc svg, .doc-add svg { width: 6px; height: 6px; stroke: #d5d6d9; stroke-width: 1.2; }
.doc.on { gap: 14px; padding-left: 5px; background: #2f3236; color: #fff; font-weight: 700; }
.doc-add { padding: 0 7px; background: #1a1b1f; }
.viewport { position: relative; flex: 1; min-height: 0; overflow: hidden; }
.scene { width: 100%; height: 100%; stroke: none; }
.building { position: absolute; left: 31px; top: 13px; color: #b4b7c2; }
.cmdline { position: absolute; left: 30%; bottom: 3px; width: 212px; padding: 1px 4px; background: rgba(40, 42, 46, .85); color: #e4e4e6; font: 8px/10px "DejaVu Sans Mono", monospace; white-space: nowrap; }
.cmdline mark { background: #5d6069; color: inherit; }
.cmdline b { color: #c79a32; font-weight: 400; }
.cmdline button { position: absolute; right: 3px; top: 14px; border: 2px solid transparent; border-bottom: 3px solid #fff; border-top: 0; }

/* assembly inspect */
.inspect { flex: 1; min-width: 0; padding: 12px 9px; border: 1px solid #41588c; border-bottom: 0; }
.inspect h1 { font-size: 8px; line-height: 10px; font-weight: 700; color: #ececee; }
.lead { margin-top: 6px; }
.backlink { display: flex; align-items: center; gap: 5px; margin-top: 17px; color: #4d86e0; font-weight: 500; }
.backlink svg { width: 8px; height: 7px; stroke: #4d86e0; stroke-width: 1; }
.inspect h2 { display: flex; align-items: center; gap: 3px; height: 10px; margin-top: 17px; font-size: 8px; }
.found { margin: 10px 0 7px; }
.card { margin-bottom: 4px; padding: 0 8px 4px; border: 1px solid #484b50; border-radius: 3px; }
.card.on { border-color: #3f66ad; }
.row { display: grid; grid-template-columns: 10px 1fr 7px 15px 10px; align-items: center; gap: 4px; height: 17px; padding-right: 3px; font-weight: 500; white-space: nowrap; }
.row.head { grid-template-columns: 9px 1fr 7px 15px 10px; height: 25px; margin-bottom: 4px; border-bottom: 1px solid #484b50; }
.row.tool { padding-left: 8px; }
.row.sel { background: #3b3d43; }
.row svg { width: 10px; height: 10px; }
.row svg.ok { width: 7px; height: 7px; stroke: #36b67c; }
.alert { color: #e8bd24; font-size: 9px; font-weight: 700; text-align: center; }
.highlight { position: absolute; inset: -8px 0 0 0; border: 3px solid #2ff0b8; pointer-events: none; }

/* status bar */
.status { display: flex; align-items: center; justify-content: space-between; height: 19px; padding: 0 5px 0 3px; background: #2f3236; font-weight: 500; }
.status button { display: flex; align-items: center; gap: 4px; height: 13px; white-space: nowrap; }
.status svg { width: 9px; height: 9px; }
.status svg.wide { width: 11px; height: 8px; }
.status svg.chev { width: 6px; height: 6px; stroke: #d5d6d9; }
.layouts { display: flex; color: #c2c4c8; }
.layouts button { padding: 0 2px; border: 1px solid #3a3d42; gap: 2px; }
.layouts .on { padding: 0 6px; background: #54555d; color: #fff; }
.layouts .sq svg { width: 8px; height: 8px; stroke-width: 1; }
.burger { width: 8px; height: 7px; background: repeating-linear-gradient(#a9abb0 0 1px, transparent 1px 2px); }
.toggles { display: flex; align-items: center; gap: 3px; }
.toggles > button { padding: 0 2px; }
.toggles > button.on { gap: 2px; background: #26385f; border: 1px solid #3b5fa5; }
.toggles .drop .chev { box-sizing: content-box; padding: 3px 0 3px 3px; border-left: 1px solid #3b5fa5; }
.pager { display: flex; }
.pager button { justify-content: center; width: 12px; border: 1px solid #3a3d42; }
.pager svg { width: 6px; height: 6px; }
.kebab { justify-content: center; width: 16px; }
.kebab span { width: 2px; height: 8px; background: repeating-linear-gradient(#e2e3e5 0 2px, transparent 2px 3px); }
```
